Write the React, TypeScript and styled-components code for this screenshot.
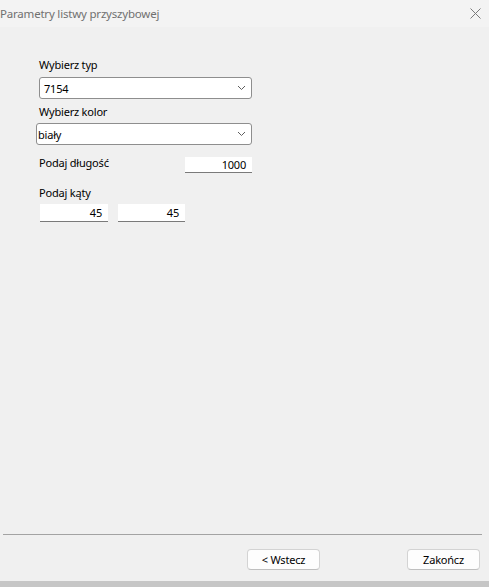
import * as React from 'react'
import styled, {createGlobalStyle} from 'styled-components'

const GlobalStyle = createGlobalStyle`
  html, body {
    margin: 0;
    padding: 0;
    background: #f0f0f0;
  }
  body {
    font-family: "Segoe UI", "Noto Sans", "Open Sans", sans-serif;
    font-size: 11px;
    letter-spacing: -0.2px;
    color: #000;
  }
`

const Window = styled.div`
  width: 489px;
  height: 587px;
  display: flex;
  flex-direction: column;
  background: #f0f0f0;
  overflow: hidden;
`

const TitleBar = styled.div`
  height: 27px;
  flex: none;
  display: flex;
  align-items: center;
  justify-content: space-between;
  background: #f3f3f3;
  color: #707070;
  font-size: 11.5px;
  padding-right: 6px;
`

const CloseButton = styled.button`
  width: 16px;
  height: 16px;
  padding: 0;
  border: none;
  background: none;
  display: flex;
  align-items: center;
  justify-content: center;
  margin-top: -1px;
`

const Body = styled.div`
  flex: 1;
  padding: 30px 0 0 38px;
`

const Form = styled.div`
  width: 214px;
  display: flex;
  flex-direction: column;
`

const Label = styled.div<{ $top?: number }>`
  height: 16px;
  line-height: 16px;
  margin-top: ${p => p.$top ?? 0}px;
  padding-left: 1px;
`

const Combo = styled.div<{ $top: number; $shift?: number }>`
  height: 22px;
  margin-top: ${p => p.$top}px;
  margin-left: ${p => p.$shift ?? 1}px;
  box-sizing: border-box;
  border: 1px solid #8e8e8e;
  border-radius: 3px;
  background: #fff;
  display: flex;
  align-items: center;
  justify-content: space-between;
  padding: 0 5px 0 ${p => (p.$shift ?? 0) < 0 ? 1 : 4}px;
`

const Row = styled.div<{ $top: number }>`
  display: flex;
  align-items: flex-start;
  justify-content: space-between;
  margin-top: ${p => p.$top}px;
`

const Inputs = styled.div`
  display: flex;
  gap: 10px;
  margin-top: 3px;
  padding-left: 2px;
`

const NumberBox = styled.div<{ $width: number; $height: number }>`
  width: ${p => p.$width}px;
  height: ${p => p.$height}px;
  box-sizing: border-box;
  background: #fff;
  border-bottom: 1px solid #7a7a7a;
  text-align: right;
  padding-right: 6px;
  line-height: ${p => p.$height}px;
`

const Footer = styled.div`
  flex: none;
  display: flex;
  flex-direction: column;
`

const Separator = styled.div`
  height: 1px;
  background: #a3a3a3;
  margin: 0 7px 0 3px;
`

const ButtonRow = styled.div`
  display: flex;
  justify-content: flex-end;
  gap: 87px;
  padding: 14px 9px 0 0;
  height: 32px;
`

const DialogButton = styled.button`
  width: 73px;
  height: 21px;
  box-sizing: border-box;
  border: 1px solid #d3d3d3;
  border-bottom-color: #bfbfbf;
  border-radius: 4px;
  background: #fdfdfd;
  font-family: inherit;
  font-size: 11px;
  letter-spacing: -0.2px;
  color: #000;
  padding: 0;
`

const BottomEdge = styled.div`
  height: 6px;
  background: #c6c6c6;
`

const Chevron = () => (
  <svg width="9" height="6" viewBox="0 0 9 6">
    <path d="M1 1 L4.5 4.5 L8 1" fill="none" stroke="#5f5f5f" strokeWidth="1"/>
  </svg>
)

export default function App() {
  return <Window>
    <GlobalStyle/>
    <TitleBar>
      <span>Parametry listwy przyszybowej</span>
      <CloseButton aria-label="Zamknij">
        <svg width="11" height="11" viewBox="0 0 11 11">
          <path d="M0.5 0.5 L10.5 10.5 M10.5 0.5 L0.5 10.5" stroke="#7a7a7a" strokeWidth="1"/>
        </svg>
      </CloseButton>
    </TitleBar>

    <Body>
      <Form>
        <Label>Wybierz typ</Label>
        <Combo $top={4}>
          <span>7154</span>
          <Chevron/>
        </Combo>

        <Label $top={5}>Wybierz kolor</Label>
        <Combo $top={3} $shift={-2}>
          <span>biały</span>
          <Chevron/>
        </Combo>

        <Row $top={12}>
          <Label $top={-2}>Podaj długość</Label>
          <NumberBox $width={67} $height={16}>1000</NumberBox>
        </Row>

        <Label $top={12}>Podaj kąty</Label>
        <Inputs>
          <NumberBox $width={68} $height={18}>45</NumberBox>
          <NumberBox $width={67} $height={18}>45</NumberBox>
        </Inputs>
      </Form>
    </Body>

    <Footer>
      <Separator/>
      <ButtonRow>
        <DialogButton>&lt; Wstecz</DialogButton>
        <DialogButton>Zakończ</DialogButton>
      </ButtonRow>
      <BottomEdge/>
    </Footer>
  </Window>
}
